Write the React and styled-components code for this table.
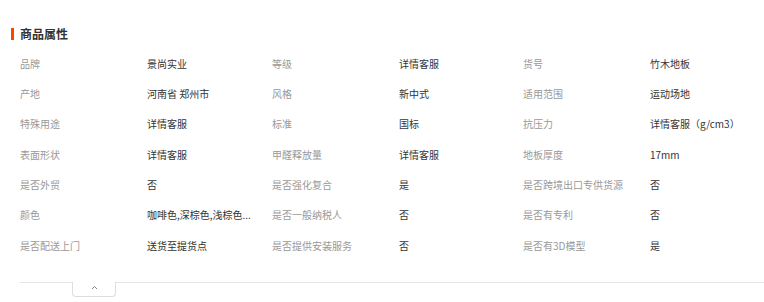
import styled, { createGlobalStyle } from "styled-components";

const GlobalStyle = createGlobalStyle`
  html, body {
    margin: 0;
    padding: 0;
    background: #fff;
    overflow: hidden;
  }
  body {
    font-family: "Noto Sans CJK SC", "Noto Sans", sans-serif;
  }
`;

const Section = styled.section`
  width: 764px;
  padding-top: 24px;
`;

const Header = styled.h2`
  margin: 0;
  padding-left: 11px;
  display: flex;
  align-items: center;
  height: 20px;
  font-size: 12px;
  font-weight: 700;
  color: #333;
  line-height: 20px;

  &::before {
    content: "";
    width: 3px;
    height: 12px;
    margin-right: 6px;
    background: #ff4400;
  }
`;

const Table = styled.div`
  margin: 4px 0 0 20px;
  display: grid;
  grid-template-columns: 127px 125px 127px 124px 127px 1fr;
  grid-auto-rows: 30.33px;
  font-size: 10px;
`;

const Cell = styled.div`
  display: flex;
  align-items: center;
  white-space: nowrap;
  overflow: hidden;
  color: ${(p) => (p.$label ? "#999" : "#333")};
`;

const Footer = styled.div`
  margin: 22px 0 0 20px;
  display: flex;
  height: 16px;
`;

const Line = styled.div`
  border-top: 1px solid #e5e5e5;
  width: ${(p) => (p.$width ? p.$width : "auto")};
  flex: ${(p) => (p.$width ? "none" : "1")};
`;

const Tab = styled.div`
  width: 44px;
  height: 15px;
  border: 1px solid #ddd;
  border-top: none;
  border-radius: 0 0 4px 4px;
  display: flex;
  align-items: center;
  justify-content: center;
  padding-bottom: 4px;
  box-sizing: border-box;
`;

const rows = [
  ["品牌", "景尚实业", "等级", "详情客服", "货号", "竹木地板"],
  ["产地", "河南省 郑州市", "风格", "新中式", "适用范围", "运动场地"],
  ["特殊用途", "详情客服", "标准", "国标", "抗压力", "详情客服（g/cm3）"],
  ["表面形状", "详情客服", "甲醛释放量", "详情客服", "地板厚度", "17mm"],
  ["是否外贸", "否", "是否强化复合", "是", "是否跨境出口专供货源", "否"],
  ["颜色", "咖啡色,深棕色,浅棕色...", "是否一般纳税人", "否", "是否有专利", "否"],
  ["是否配送上门", "送货至提货点", "是否提供安装服务", "否", "是否有3D模型", "是"],
];

const App = () => (
  <>
    <GlobalStyle />
    <Section>
      <Header>商品属性</Header>
      <Table>
        {rows.map((row, i) =>
          row.map((text, j) => (
            <Cell key={`${i}-${j}`} $label={j % 2 === 0}>
              {text}
            </Cell>
          ))
        )}
      </Table>
      <Footer>
        <Line $width="52px" />
        <Tab>
          <svg width="7" height="5" viewBox="0 0 7 5">
            <polyline
              points="1,4 3.5,1.5 6,4"
              fill="none"
              stroke="#888"
              strokeWidth="1"
            />
          </svg>
        </Tab>
        <Line />
      </Footer>
    </Section>
  </>
);

export default App;
